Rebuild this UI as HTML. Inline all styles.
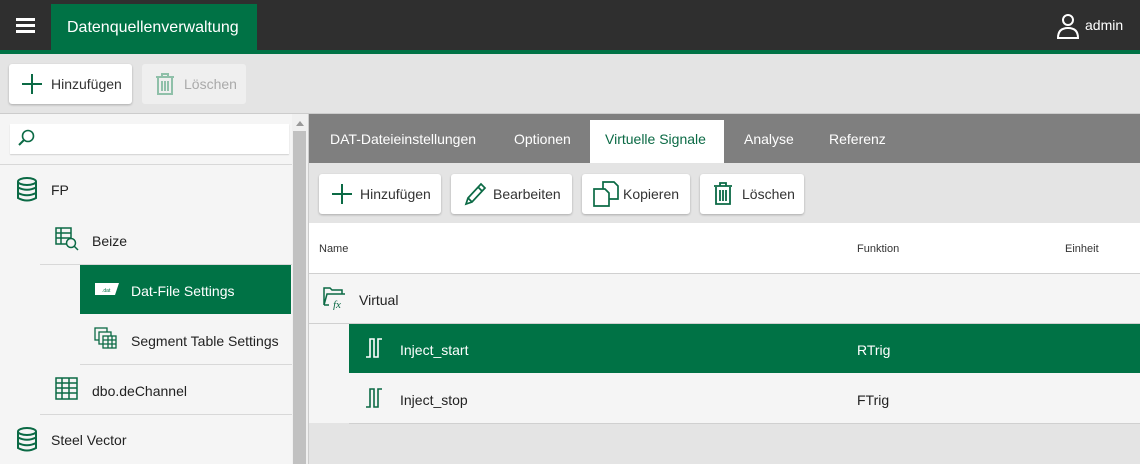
<!DOCTYPE html>
<html><head><style>
*{box-sizing:border-box;margin:0;padding:0}
body{width:1140px;height:464px;overflow:hidden;font-family:"Liberation Sans",sans-serif;background:#e4e4e4;position:relative;color:#222}
.a{position:absolute}
.btn{position:absolute;background:#fff;border-radius:3px;box-shadow:0 1px 2px rgba(0,0,0,.25);font-size:14px;display:flex;align-items:center;color:#333}
.row{position:absolute;font-size:14px;display:flex;align-items:center}
</style></head><body>
<div class="a" style="left:0;top:0;width:1140px;height:50px;background:#2f2f2f"></div>
<div class="a" style="left:0;top:50px;width:1140px;height:4px;background:#007245"></div>
<div class="a" style="left:16px;top:18px;width:19px;height:3px;background:#fff;box-shadow:0 6px 0 #fff,0 12px 0 #fff"></div>
<div class="a" style="left:51px;top:4px;width:206px;height:46px;background:#007245;color:#fff;font-size:16px;padding:15px 0 0 16px">Datenquellenverwaltung</div>
<svg class="a" style="left:1056px;top:13px" width="24" height="26" viewBox="0 0 24 26"><circle cx="12" cy="7" r="5" fill="none" stroke="#fff" stroke-width="2"/><path d="M2 25 Q2 15 12 15 Q22 15 22 25 Z" fill="none" stroke="#fff" stroke-width="2"/></svg>
<div class="a" style="left:1085px;top:17px;color:#fff;font-size:14px">admin</div>

<div class="btn" style="left:9px;top:64px;width:123px;height:40px;padding-left:12px"><svg width="22" height="22"><path d="M11 1V21M1 11H21" stroke="#0b6a45" stroke-width="2"/></svg><span style="margin-left:8px">Hinzufügen</span></div>
<div class="btn" style="left:142px;top:64px;width:104px;height:40px;padding-left:13px;background:#efefef;box-shadow:none;color:#aaa"><svg width="20" height="22"><path d="M1 4H19M7 4V1H13V4M3 5V21H17V5M7 8V18M10 8V18M13 8V18" stroke="#8fc0a9" stroke-width="2" fill="none"/></svg><span style="margin-left:9px">Löschen</span></div>
<div class="a" style="left:0;top:113px;width:1140px;height:1px;background:#ccc"></div>

<div class="a" style="left:0;top:114px;width:292px;height:350px;background:#f5f5f5"></div>
<div class="a" style="left:292px;top:114px;width:16px;height:350px;background:#f0f0f0"></div>
<div class="a" style="left:293px;top:131px;width:13px;height:333px;background:#c1c1c1"></div>
<div class="a" style="left:296px;top:121px;width:0;height:0;border:4px solid transparent;border-bottom:5px solid #999;border-top:0"></div>
<div class="a" style="left:308px;top:114px;width:1px;height:350px;background:#ccc"></div>
<div class="a" style="left:10px;top:124px;width:279px;height:30px;background:#fff;box-shadow:0 1px 1px rgba(0,0,0,.15)"></div>
<svg class="a" style="left:16px;top:128px" width="20" height="20"><circle cx="12" cy="8" r="5.5" fill="none" stroke="#0b6a45" stroke-width="1.6"/><path d="M8 12L3 17" stroke="#0b6a45" stroke-width="2"/></svg>
<div class="a" style="left:0;top:164px;width:292px;height:1px;background:#d8d8d8"></div>
<svg class="a" style="left:16px;top:177px" width="22" height="26"><g fill="none" stroke="#0b6a45" stroke-width="2"><ellipse cx="11" cy="4.5" rx="9" ry="3.5"/><path d="M2 4.5V21Q11 26 20 21V4.5M2 10.5Q11 15 20 10.5M2 16Q11 20.5 20 16"/></g></svg>
<div class="row" style="left:51px;top:182px">FP</div>
<svg class="a" style="left:55px;top:227px" width="24" height="24"><g fill="none" stroke="#0b6a45" stroke-width="1.5"><rect x="1" y="1" width="15" height="16"/><path d="M1 6H16M1 11H16M6 1V17"/><circle cx="16" cy="16" r="4.5" fill="#f5f5f5"/><path d="M19 19L23 23"/></g></svg>
<div class="row" style="left:92px;top:233px">Beize</div>
<div class="a" style="left:40px;top:264px;width:252px;height:1px;background:#d8d8d8"></div>
<div class="a" style="left:80px;top:265px;width:211px;height:49px;background:#007245"></div>
<svg class="a" style="left:94px;top:282px" width="26" height="14"><path d="M1 1H25L21 13H1Z" fill="#fff"/><text x="8" y="10" font-size="5" fill="#007245" font-family="Liberation Sans">.dat</text></svg>
<div class="row" style="left:131px;top:283px;color:#fff">Dat-File Settings</div>
<svg class="a" style="left:94px;top:327px" width="24" height="22"><g fill="#f5f5f5" stroke="#0b6a45" stroke-width="1.3"><rect x="1" y="1" width="12" height="12"/><rect x="5" y="5" width="12" height="12"/><rect x="9" y="9" width="13" height="12"/><path d="M9 13H22M9 17H22M14 9V21M18 9V21"/></g></svg>
<div class="row" style="left:131px;top:333px">Segment Table Settings</div>
<div class="a" style="left:80px;top:364px;width:212px;height:1px;background:#d8d8d8"></div>
<svg class="a" style="left:55px;top:377px" width="24" height="24"><g fill="none" stroke="#0b6a45" stroke-width="1.5"><rect x="1" y="1" width="21" height="21"/><path d="M1 6H22M1 11H22M1 16H22M7 1V22M14 1V22"/></g></svg>
<div class="row" style="left:92px;top:383px">dbo.deChannel</div>
<div class="a" style="left:40px;top:414px;width:252px;height:1px;background:#d8d8d8"></div>
<svg class="a" style="left:16px;top:427px" width="22" height="26"><g fill="none" stroke="#0b6a45" stroke-width="2"><ellipse cx="11" cy="4.5" rx="9" ry="3.5"/><path d="M2 4.5V21Q11 26 20 21V4.5M2 10.5Q11 15 20 10.5M2 16Q11 20.5 20 16"/></g></svg>
<div class="row" style="left:51px;top:432px">Steel Vector</div>

<div class="a" style="left:309px;top:114px;width:831px;height:49px;background:#7f7f7f"></div>
<div class="a" style="left:330px;top:131px;color:#fff;font-size:14px">DAT-Dateieinstellungen</div>
<div class="a" style="left:514px;top:131px;color:#fff;font-size:14px">Optionen</div>
<div class="a" style="left:590px;top:120px;width:134px;height:43px;background:#fff;color:#0b6a45;font-size:14px;padding:11px 0 0 15px">Virtuelle Signale</div>
<div class="a" style="left:744px;top:131px;color:#fff;font-size:14px">Analyse</div>
<div class="a" style="left:829px;top:131px;color:#fff;font-size:14px">Referenz</div>

<div class="btn" style="left:319px;top:174px;width:122px;height:40px;padding-left:12px"><svg width="22" height="22"><path d="M11 1V21M1 11H21" stroke="#0b6a45" stroke-width="2"/></svg><span style="margin-left:7px">Hinzufügen</span></div>
<div class="btn" style="left:451px;top:174px;width:121px;height:40px;padding-left:12px"><svg width="24" height="24"><path d="M3 22L5 16L18 2L22 6L9 20ZM5 16L9 20M15 5L19 9" stroke="#0b6a45" stroke-width="1.7" fill="none"/></svg><span style="margin-left:6px">Bearbeiten</span></div>
<div class="btn" style="left:582px;top:174px;width:108px;height:40px;padding-left:11px"><svg width="26" height="26"><path d="M10 8V1H21L25 5V18H16" stroke="#0b6a45" stroke-width="1.7" fill="#fff"/><path d="M1 8H12L16 12V25H1Z" stroke="#0b6a45" stroke-width="1.7" fill="#fff"/></svg><span style="margin-left:4px">Kopieren</span></div>
<div class="btn" style="left:700px;top:174px;width:104px;height:40px;padding-left:13px"><svg width="20" height="24"><path d="M1 4H19M7 4V1H13V4M3 5V22H17V5M7 8V19M10 8V19M13 8V19" stroke="#0b6a45" stroke-width="1.8" fill="none"/></svg><span style="margin-left:9px">Löschen</span></div>

<div class="a" style="left:309px;top:223px;width:831px;height:50px;background:#fff"></div>
<div class="a" style="left:319px;top:243px;font-size:11px;color:#333">Name</div>
<div class="a" style="left:857px;top:243px;font-size:11px;color:#333">Funktion</div>
<div class="a" style="left:1065px;top:243px;font-size:11px;color:#333">Einheit</div>
<div class="a" style="left:309px;top:273px;width:831px;height:1px;background:#d0d0d0"></div>
<div class="a" style="left:309px;top:274px;width:831px;height:149px;background:#f5f5f5"></div>
<svg class="a" style="left:322px;top:286px" width="26" height="24"><path d="M2 19V2H8L10 4H20V8M2 19L5 8H23M7 19H2" stroke="#0b6a45" stroke-width="1.5" fill="none"/><text x="11" y="22" font-size="11" font-style="italic" fill="#0b6a45" font-family="Liberation Serif">fx</text></svg>
<div class="row" style="left:359px;top:292px">Virtual</div>
<div class="a" style="left:309px;top:323px;width:831px;height:1px;background:#d0d0d0"></div>
<div class="a" style="left:349px;top:324px;width:791px;height:49px;background:#007245"></div>
<svg class="a" style="left:365px;top:337px" width="20" height="22"><path d="M1 20H5V2H9V20H13V2H17" stroke="#fff" stroke-width="1.6" fill="none"/></svg>
<div class="row" style="left:400px;top:342px;color:#fff">Inject_start</div>
<div class="row" style="left:857px;top:342px;color:#fff">RTrig</div>
<svg class="a" style="left:365px;top:387px" width="20" height="22"><path d="M1 20H5V2H9V20H13V2H17" stroke="#0b6a45" stroke-width="1.6" fill="none"/></svg>
<div class="row" style="left:400px;top:392px">Inject_stop</div>
<div class="row" style="left:857px;top:392px">FTrig</div>
<div class="a" style="left:349px;top:423px;width:791px;height:1px;background:#d0d0d0"></div>
</body></html>
